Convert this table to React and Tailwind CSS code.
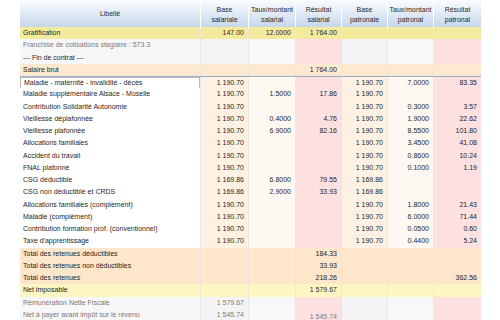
import React from "react";

// colonnes : libellé, base sal., taux sal., résultat sal., base pat., taux pat., résultat pat.
const cols = "grid grid-cols-[180px_48px_47px_46px_46px_46px_48px]";

const rows = [
  { kind: "grat", label: "Gratification", v: ["147.00", "12.0000", "1 764.00", "", "", ""] },
  { kind: "info", label: "Franchise de cotisations stagiaire : 573.3", v: ["", "", "", "", "", ""] },
  { kind: "info", dark: true, label: "--- Fin de contrat ---", v: ["", "", "", "", "", ""] },
  { kind: "brut", label: "Salaire brut", v: ["", "", "1 764.00", "", "", ""] },
  { kind: "body", sel: true, label: "Maladie - maternité - invalidité - décès", v: ["1 190.70", "", "", "1 190.70", "7.0000", "83.35"] },
  { kind: "body", label: "Maladie supplémentaire Alsace - Moselle", v: ["1 190.70", "1.5000", "17.86", "1 190.70", "", ""] },
  { kind: "body", label: "Contribution Solidarité Autonomie", v: ["1 190.70", "", "", "1 190.70", "0.3000", "3.57"] },
  { kind: "body", label: "Vieillesse déplafonnée", v: ["1 190.70", "0.4000", "4.76", "1 190.70", "1.9000", "22.62"] },
  { kind: "body", label: "Vieillesse plafonnée", v: ["1 190.70", "6.9000", "82.16", "1 190.70", "8.5500", "101.80"] },
  { kind: "body", label: "Allocations familiales", v: ["1 190.70", "", "", "1 190.70", "3.4500", "41.08"] },
  { kind: "body", label: "Accident du travail", v: ["1 190.70", "", "", "1 190.70", "0.8600", "10.24"] },
  { kind: "body", label: "FNAL plafonné", v: ["1 190.70", "", "", "1 190.70", "0.1000", "1.19"] },
  { kind: "body", label: "CSG déductible", v: ["1 169.86", "6.8000", "79.55", "1 169.86", "", ""] },
  { kind: "body", label: "CSG non déductible et CRDS", v: ["1 169.86", "2.9000", "33.93", "1 169.86", "", ""] },
  { kind: "body", label: "Allocations familiales (complément)", v: ["1 190.70", "", "", "1 190.70", "1.8000", "21.43"] },
  { kind: "body", label: "Maladie (complément)", v: ["1 190.70", "", "", "1 190.70", "6.0000", "71.44"] },
  { kind: "body", label: "Contribution formation prof. (conventionnel)", v: ["1 190.70", "", "", "1 190.70", "0.0500", "0.60"] },
  { kind: "body", label: "Taxe d'apprentissage", v: ["1 190.70", "", "", "1 190.70", "0.4400", "5.24"] },
  { kind: "total", label: "Total des retenues déductibles", v: ["", "", "184.33", "", "", ""] },
  { kind: "total", label: "Total des retenues non déductibles", v: ["", "", "33.93", "", "", ""] },
  { kind: "total", label: "Total des retenues", v: ["", "", "218.26", "", "", "362.56"] },
  { kind: "net", label: "Net imposable", v: ["", "", "1 579.67", "", "", ""] },
  { kind: "fisc", label: "Rémunération Nette Fiscale", v: ["1 579.67", "", "", "", "", ""] },
  { kind: "fisc", low: true, label: "Net à payer avant impôt sur le revenu", v: ["1 545.74", "", "1 545.74", "", "", ""] },
];

const bodyBg = ["bg-[#fdf1e3]", "bg-[#fdf8f1]", "bg-[#fde1e1]", "bg-[#fdf1e3]", "bg-[#fdf8f1]", "bg-[#fde1e1]"];
const infoBg = ["bg-[#f4f4f6]", "bg-[#f8f8f9]", "bg-[#fde1e1]", "bg-[#f4f4f6]", "bg-[#f8f8f9]", "bg-[#fde1e1]"];

function Row({ r }) {
  const flat = {
    grat: "bg-[#f3ea9e]",
    brut: "bg-[#fde9cf]",
    total: "bg-[#fde6c9]",
    net: "bg-[#fdf6c2]",
  }[r.kind];
  const grey = r.kind === "info" || r.kind === "fisc";
  return (
    <div className={`${cols} h-[12.25px] leading-[12px] ${flat || ""} ${r.sel ? "border-t border-[#9fb0cf]" : ""}`}>
      <div
        className={`px-[3px] whitespace-nowrap overflow-hidden ${
          flat ? "" : grey ? "bg-[#f7f7f7]" : "bg-white"
        } ${grey && !r.dark ? "text-[#7a7a7a]" : "text-[#1f1f1f]"} ${
          r.sel ? "border border-[#b9b9b9] leading-[10px]" : ""
        }`}
      >
        {r.label}
      </div>
      {r.v.map((v, i) => (
        <div
          key={i}
          className={`px-[4px] text-right whitespace-nowrap border-l border-[#ece7e0] ${
            flat ? "" : grey ? infoBg[i] : bodyBg[i]
          } ${grey ? "text-[#7a7a7a]" : "text-[#1f1f1f]"} ${r.low && i === 2 ? "pt-[2px]" : ""} ${
            r.sel && i < 3 && i > 0 ? "border-b border-b-[#9fb0cf]" : ""
          }`}
        >
          {v}
        </div>
      ))}
    </div>
  );
}

export default function App() {
  const head = [
    ["Base", "salariale"],
    ["Taux/montant", "salarial"],
    ["Résultat", "salarial"],
    ["Base", "patronale"],
    ["Taux/montant", "patronal"],
    ["Résultat", "patronal"],
  ];
  return (
    <div className="w-[500px] h-[320px] overflow-hidden bg-white pl-[20px] font-['Liberation_Sans',Arial,sans-serif] text-[7px]">
      <div className="w-[461px]">
        <div className={`${cols} h-[27px] pt-[2px] bg-gradient-to-b from-[#fbfcfe] to-[#c6d7eb] text-[#2a2a2a]`}>
          <div className="flex items-center justify-center">Libellé</div>
          {head.map((h, i) => (
            <div key={i} className="flex flex-col items-center justify-center leading-[10px] border-l border-white">
              <span>{h[0]}</span>
              <span>{h[1]}</span>
            </div>
          ))}
        </div>
        {rows.map((r, i) => (
          <Row key={i} r={r} />
        ))}
      </div>
    </div>
  );
}
